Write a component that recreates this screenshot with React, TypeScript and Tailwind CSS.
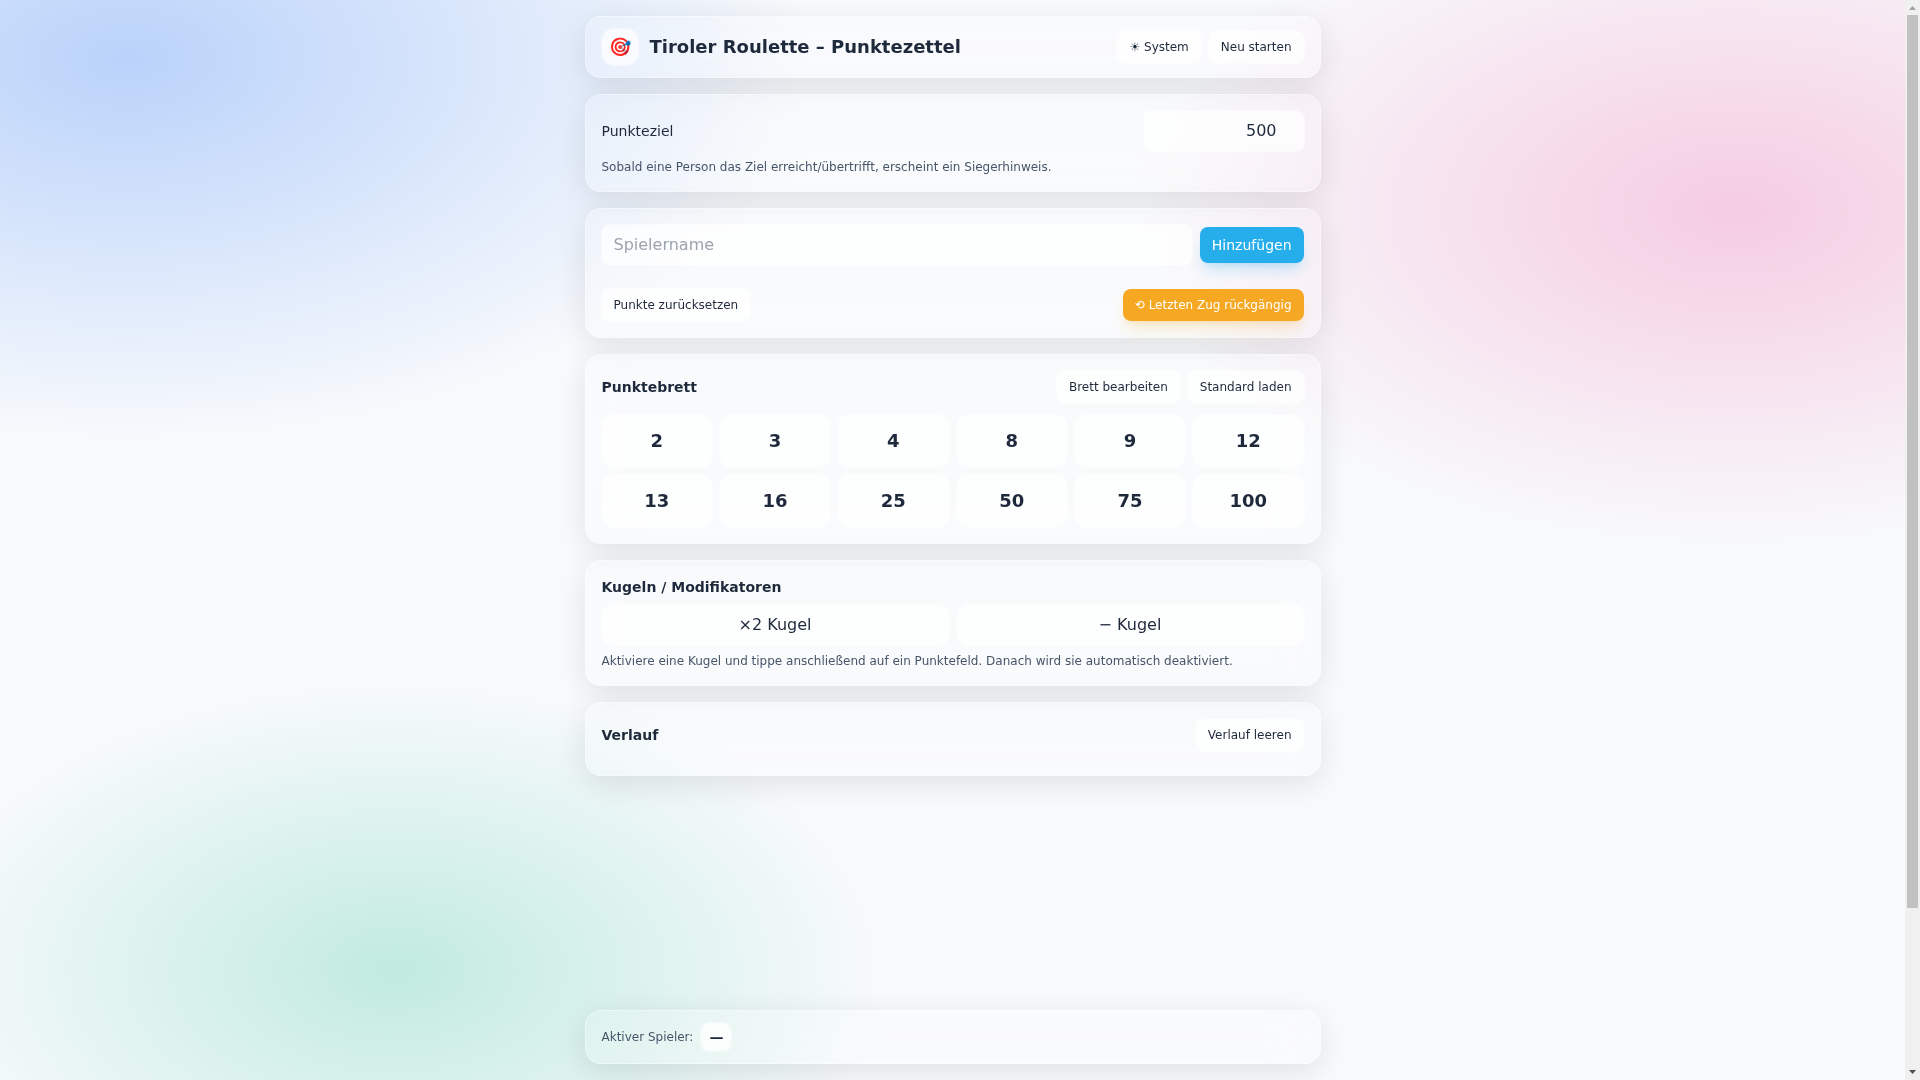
// Score sheet for Tiroler Roulette.
import { useState } from 'react';
import type { ReactNode } from 'react';

const BOARD = [2, 3, 4, 8, 9, 12, 13, 16, 25, 50, 75, 100];

const GLASS =
  'rounded-2xl border border-white/40 bg-white/15 shadow-[0_8px_32px_rgba(0,0,0,0.10)] backdrop-blur-xl';
const CONTROL = 'bg-white/70 ring-1 ring-white/40';

interface CardProps {
  children: ReactNode;
}

function Card({ children }: CardProps) {
  return <section className={`${GLASS} p-4`}>{children}</section>;
}

function SmallButton({ children }: CardProps) {
  return (
    <button type="button" className={`${CONTROL} rounded-lg px-3 py-2 text-xs`}>
      {children}
    </button>
  );
}

// Three soft colour spots behind the cards
function Backdrop() {
  return (
    <div className="pointer-events-none absolute inset-0 bg-[radial-gradient(680px_385px_at_127px_59px,rgba(59,130,246,0.33),transparent),radial-gradient(590px_340px_at_1735px_210px,rgba(236,72,153,0.26),transparent),radial-gradient(490px_290px_at_395px_970px,rgba(16,185,129,0.24),transparent)]" />
  );
}

// Classic scrollbar column next to the page
function ScrollTrack() {
  return (
    <div className="flex w-[15px] shrink-0 flex-col items-center bg-[#f0f0f0]" aria-hidden="true">
      <svg width="15" height="15" viewBox="0 0 15 15">
        <path d="M4 10h7L7.5 6z" fill="#a3a3a3" />
      </svg>
      <div className="flex w-full flex-1 flex-col items-center">
        <div className="h-[85%] w-[11px] bg-[#c1c1c1]" />
      </div>
      <svg width="15" height="15" viewBox="0 0 15 15">
        <path d="M4 5h7L7.5 9z" fill="#505050" />
      </svg>
    </div>
  );
}

export default function App() {
  const [target, setTarget] = useState(500);
  const [name, setName] = useState('');

  return (
    <div className="flex h-screen bg-[#f8fafc] font-['DejaVu_Sans',sans-serif] text-[#1e293b]">
      <div className="relative flex min-w-0 flex-1 flex-col overflow-hidden">
        <Backdrop />

        <main className="relative mx-auto flex w-full max-w-3xl flex-1 flex-col gap-4 p-4">
          <header className={`${GLASS} flex items-center justify-between px-4 py-3`}>
            <div className="flex items-center gap-3">
              <span className={`${CONTROL} flex size-9 items-center justify-center rounded-xl text-lg`}>🎯</span>
              <h1 className="text-lg leading-7 font-bold">Tiroler Roulette – Punktezettel</h1>
            </div>
            <div className="flex gap-2">
              <SmallButton>☀ System</SmallButton>
              <SmallButton>Neu starten</SmallButton>
            </div>
          </header>

          <Card>
            <div className="flex items-center justify-between">
              <label htmlFor="target" className="text-sm">
                Punkteziel
              </label>
              <input
                id="target"
                type="number"
                value={target}
                onChange={(e) => setTarget(Number(e.target.value))}
                className={`${CONTROL} w-40 rounded-lg px-3 py-2 text-right`}
              />
            </div>
            <p className="mt-2 text-xs text-[#475569]">
              Sobald eine Person das Ziel erreicht/übertrifft, erscheint ein Siegerhinweis.
            </p>
          </Card>

          <Card>
            <div className="flex items-center gap-2">
              <input
                type="text"
                aria-label="Spielername"
                placeholder="Spielername"
                value={name}
                onChange={(e) => setName(e.target.value)}
                className={`${CONTROL} min-w-0 flex-1 rounded-lg px-3 py-2 placeholder:text-[#9ca3af]`}
              />
              <button
                type="button"
                className="rounded-lg bg-[#0ea5e9]/90 px-3 py-2 text-sm text-white shadow-lg shadow-[#0ea5e9]/20"
              >
                Hinzufügen
              </button>
            </div>
            <div className="mt-6 flex items-center justify-between">
              <SmallButton>Punkte zurücksetzen</SmallButton>
              <button
                type="button"
                className="rounded-lg bg-[#f59e0b]/90 px-3 py-2 text-xs text-white shadow-lg shadow-[#f59e0b]/20"
              >
                ⟲ Letzten Zug rückgängig
              </button>
            </div>
          </Card>

          <Card>
            <div className="mb-3 flex items-center justify-between">
              <h2 className="text-sm font-semibold">Punktebrett</h2>
              <div className="flex gap-2">
                <SmallButton>Brett bearbeiten</SmallButton>
                <SmallButton>Standard laden</SmallButton>
              </div>
            </div>
            <div className="grid grid-cols-6 gap-2">
              {BOARD.map((points) => (
                <button
                  key={points}
                  type="button"
                  className={`${CONTROL} rounded-xl py-3 text-lg leading-7 font-semibold`}
                >
                  {points}
                </button>
              ))}
            </div>
          </Card>

          <Card>
            <h2 className="mb-2 text-sm font-semibold">Kugeln / Modifikatoren</h2>
            <div className="grid grid-cols-2 gap-2">
              <button type="button" className={`${CONTROL} rounded-xl py-2`}>
                ×2 Kugel
              </button>
              <button type="button" className={`${CONTROL} rounded-xl py-2`}>
                − Kugel
              </button>
            </div>
            <p className="mt-2 text-xs text-[#475569]">
              Aktiviere eine Kugel und tippe anschließend auf ein Punktefeld. Danach wird sie automatisch deaktiviert.
            </p>
          </Card>

          <Card>
            <div className="mb-2 flex items-center justify-between">
              <h2 className="text-sm font-semibold">Verlauf</h2>
              <SmallButton>Verlauf leeren</SmallButton>
            </div>
          </Card>

          {/* Active player bar stays at the bottom */}
          <footer className={`${GLASS} mt-auto flex items-center gap-2 px-4 py-3`}>
            <span className="text-xs text-[#475569]">Aktiver Spieler:</span>
            <span className={`${CONTROL} rounded-lg px-2 py-1 text-sm font-semibold`}>—</span>
          </footer>
        </main>
      </div>
      <ScrollTrack />
    </div>
  );
}
